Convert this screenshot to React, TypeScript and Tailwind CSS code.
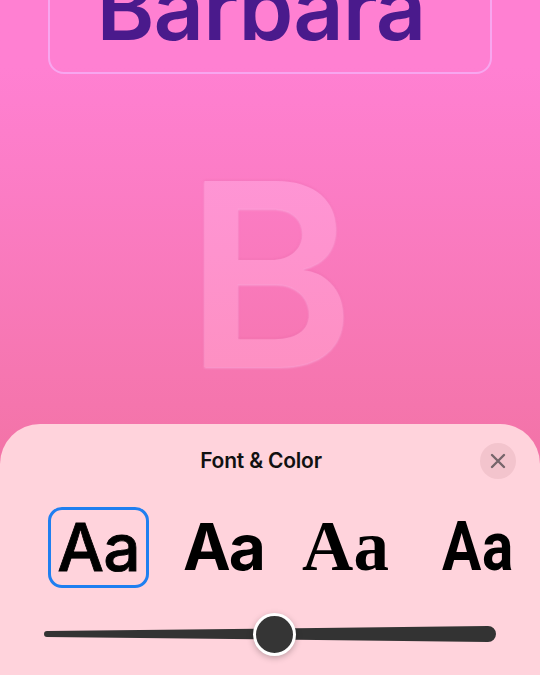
import React from "react";

const fonts = [
  { label: "Aa", className: "font-['Inter',sans-serif] font-medium text-[66px] tracking-[-1px] [-webkit-text-stroke:0.8px_black]", selected: true },
  { label: "Aa", className: "font-['Inter',sans-serif] font-bold text-[64px] tracking-[-2px] -translate-x-[4px]", selected: false },
  { label: "Aa", className: "font-['Liberation_Serif',serif] font-bold text-[71px] -translate-x-[11px]", selected: false },
  { label: "Aa", className: "font-['Roboto',sans-serif] font-bold text-[68px] tracking-[1px] scale-x-[0.86] -translate-x-[7px]", selected: false },
];

const App: React.FC = () => {
  return (
    <div className="w-[540px] h-[675px] overflow-hidden flex flex-col bg-linear-to-b from-[#ff80d2] from-10% via-[#f575ad] via-60% to-[#e86d8f]">
      {/* name field */}
      <div className="px-[48px]">
        <div className="-mt-[40px] h-[114px] rounded-[16px] border-2 border-[#f8a6ef] flex items-end justify-center">
          <span className="mb-[20px] mr-[18px] font-['Inter',sans-serif] font-semibold text-[88px] leading-none text-[#4a1a8c] tracking-[-1px]">
            Barbara
          </span>
        </div>
      </div>

      {/* monogram */}
      <div className="flex-1 flex items-center justify-center">
        <span
          className="font-['Inter',sans-serif] font-semibold text-[256px] leading-none pt-[50px] bg-linear-to-b from-[#ff97dd] to-[#fd8fbf] bg-clip-text text-transparent"
          style={{ filter: "drop-shadow(0 1px 1px rgba(255,200,240,0.6)) drop-shadow(0 -1px 1px rgba(210,70,140,0.18))" }}
        >
          B
        </span>
      </div>

      {/* sheet */}
      <div className="h-[251px] shrink-0 rounded-t-[40px] bg-[#ffd3dc] flex flex-col">
        <div className="relative h-[74px] flex items-center justify-center">
          <span className="mr-[18px] font-['Inter',sans-serif] font-semibold text-[21px] text-[#111] tracking-[-0.2px]">
            Font &amp; Color
          </span>
          <button className="absolute right-[24px] top-[19px] w-[36px] h-[36px] rounded-full bg-[#f3c4cd] flex items-center justify-center">
            <svg width="16" height="16" viewBox="0 0 16 16">
              <path d="M2 2 L14 14 M14 2 L2 14" stroke="#76656b" strokeWidth="2.4" strokeLinecap="round" />
            </svg>
          </button>
        </div>

        <div className="flex pl-[34px] mt-[9px]">
          {fonts.map((f, i) => (
            <div key={i} className="w-[129px] shrink-0 flex justify-center">
              <div
                className={
                  "w-[101px] h-[81px] rounded-[14px] flex items-center justify-center " +
                  (f.selected ? "border-[3px] border-[#1f7ff0]" : "border-[3px] border-transparent")
                }
              >
                <span className={"leading-none text-black pb-[2px] " + f.className}>{f.label}</span>
              </div>
            </div>
          ))}
        </div>

        <div className="relative mx-[44px] mt-[24px] h-[44px] flex items-center">
          <svg width="452" height="18" viewBox="0 0 452 18" className="block">
            <path d="M3 6 L444 1 A8 8 0 0 1 444 17 L3 12 A3 3 0 0 1 3 6 Z" fill="#333333" />
          </svg>
          <div className="absolute left-[209px] top-[1px] w-[43px] h-[43px] rounded-full bg-[#353535] border-[3px] border-white shadow-[0_2px_6px_rgba(0,0,0,0.25)]" />
        </div>
      </div>
    </div>
  );
};

export default App;
